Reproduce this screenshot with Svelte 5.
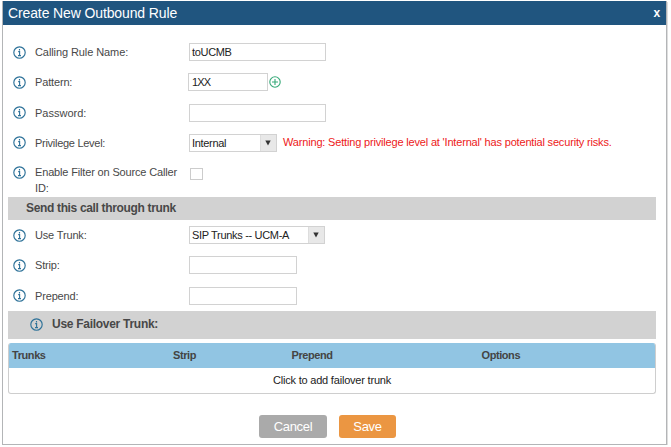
<script>
  const columns = ['Trunks', 'Strip', 'Prepend', 'Options'];
</script>

{#snippet info()}
  <svg class="info" viewBox="0 0 13 13" aria-hidden="true">
    <circle cx="6.5" cy="6.5" r="5.7" />
    <path d="M6.5 2.9v1.5M5.2 5.6h1.4v3.9M5 9.6h3" />
  </svg>
{/snippet}

{#snippet arrow()}
  <span class="arrow"><svg viewBox="0 0 6 6"><path d="M.3 .6h5.4L3 5.6z" /></svg></span>
{/snippet}

<div class="dialog">
  <header><span class="title">Create New Outbound Rule</span><b>x</b></header>
  <main>
    <section class="first">
      <div class="row">{@render info()}<span class="label name">Calling Rule Name:</span><div class="field wide">toUCMB</div></div>
      <div class="row">
        {@render info()}<span class="label">Pattern:</span><div class="field pattern">1XX</div>
        <svg class="plus" viewBox="0 0 12 12"><circle cx="6" cy="6" r="5.2" /><path d="M3 6h6M6 3v6" /></svg>
      </div>
      <div class="row">{@render info()}<span class="label password">Password:</span><div class="field wide"></div></div>
      <div class="row">
        {@render info()}<span class="label level">Privilege Level:</span>
        <div class="field select level-select"><span>Internal</span>{@render arrow()}</div>
        <span class="warning">Warning: Setting privilege level at 'Internal' has potential security risks.</span>
      </div>
      <div class="row filter">{@render info()}<span class="label">Enable Filter on Source Caller<br />ID:</span><span class="check"></span></div>
    </section>
    <h2>Send this call through trunk</h2>
    <section class="second">
      <div class="row">{@render info()}<span class="label">Use Trunk:</span><div class="field select trunk-select"><span>SIP Trunks -- UCM-A</span>{@render arrow()}</div></div>
      <div class="row">{@render info()}<span class="label">Strip:</span><div class="field medium"></div></div>
      <div class="row">{@render info()}<span class="label">Prepend:</span><div class="field medium"></div></div>
    </section>
    <h2 class="failover">{@render info()}<span>Use Failover Trunk:</span></h2>
    <div class="table">
      <div class="head">{#each columns as column}<span>{column}</span>{/each}</div>
      <div class="empty"><span>Click to add failover trunk</span></div>
    </div>
    <footer><button class="cancel">Cancel</button><button class="save">Save</button></footer>
  </main>
</div>

<style>
  :global(body) { background: #fff; }
  .dialog {
    box-sizing: border-box;
    width: 665px;
    height: 444px;
    margin: 1px 0 0 2px;
    border: 1px solid #b3b5b7;
    border-top: 0;
    box-shadow: 1px 1px 0 #dedede;
    font: 11px/15px "Liberation Sans", Arial, sans-serif;
    color: #484848;
    white-space: nowrap;
  }
  header {
    display: flex;
    justify-content: space-between;
    align-items: center;
    box-sizing: border-box;
    height: 24px;
    padding: 0 6px 0 5px;
    background: #20557f;
    color: #fff;
    font-size: 14px;
    letter-spacing: -0.12px;
  }
  header b { font-size: 12px; }
  main { padding: 12px 10px 0 5px; }
  section { padding-left: 5px; }
  .first { height: 160px; }
  .second { height: 91px; }
  .row { display: flex; align-items: center; height: 30.25px; }
  .info {
    flex: none;
    width: 13px;
    height: 13px;
    fill: none;
    stroke: #2e7299;
    stroke-width: 1.15;
  }
  .label { flex: none; width: 154px; margin-left: 9px; padding-top: 1px; letter-spacing: -0.16px; }
  .name { letter-spacing: -0.09px; }
  .password { letter-spacing: 0; }
  .level { letter-spacing: -0.28px; }
  .field {
    box-sizing: border-box;
    flex: none;
    height: 18px;
    padding-left: 2px;
    border: 1px solid #d2d2d2;
    color: #222;
    line-height: 16px;
    letter-spacing: -0.32px;
  }
  .wide { width: 137px; }
  .medium { width: 108px; }
  .pattern { width: 80px; margin-left: -1px; padding-left: 3px; letter-spacing: -0.8px; }
  .plus { width: 12px; height: 12px; margin-left: 1px; fill: none; stroke: #36a978; stroke-width: 1.1; }
  .select { display: flex; justify-content: space-between; }
  .level-select { width: 88px; }
  .trunk-select { width: 136px; }
  .arrow {
    display: flex;
    align-items: center;
    justify-content: center;
    width: 15px;
    background: #e8e8e8;
    border-left: 1px solid #ddd;
  }
  .arrow svg { width: 6px; height: 6px; margin-right: 2px; fill: #333; }
  .warning { margin-left: 6px; color: #ed2020; letter-spacing: -0.175px; }
  .filter { height: 39px; align-items: flex-start; }
  .filter .info { margin-top: 8px; }
  .filter .label { padding-top: 7px; line-height: 15.5px; }
  .check {
    box-sizing: border-box;
    width: 13px;
    height: 12px;
    margin: 10px 0 0 1px;
    border: 1px solid #ccc;
  }
  h2 {
    display: flex;
    align-items: center;
    box-sizing: border-box;
    height: 23px;
    margin: 0;
    padding-left: 18px;
    background: #d2d2d2;
    font-size: 12px;
    line-height: 15px;
    letter-spacing: -0.34px;
  }
  .failover { height: 28px; padding: 0 0 2px 22px; gap: 9px; letter-spacing: -0.28px; }
  .table {
    box-sizing: border-box;
    height: 51px;
    margin-top: 4px;
    border: 1px solid #cecece;
    border-top: 0;
    border-radius: 3px;
    overflow: hidden;
    background: #fff;
  }
  .head {
    display: grid;
    grid-template-columns: 161px 118.5px 190px 1fr;
    align-items: center;
    height: 25px;
    padding-left: 3px;
    background: #91c5e3;
    color: #444;
    font-weight: bold;
    letter-spacing: -0.42px;
  }
  .empty {
    display: flex;
    align-items: center;
    justify-content: center;
    height: 24px;
    color: #222;
    letter-spacing: -0.2px;
  }
  footer { display: flex; gap: 12px; margin-top: 21px; padding-left: 251px; }
  button {
    height: 23px;
    padding: 0;
    border: 0;
    border-radius: 3px;
    color: #fff;
    font: 13px "Liberation Sans", Arial, sans-serif;
    letter-spacing: -0.3px;
  }
  .cancel { width: 68px; background: #aaa; }
  .save { width: 57px; background: #eb9642; }
</style>
